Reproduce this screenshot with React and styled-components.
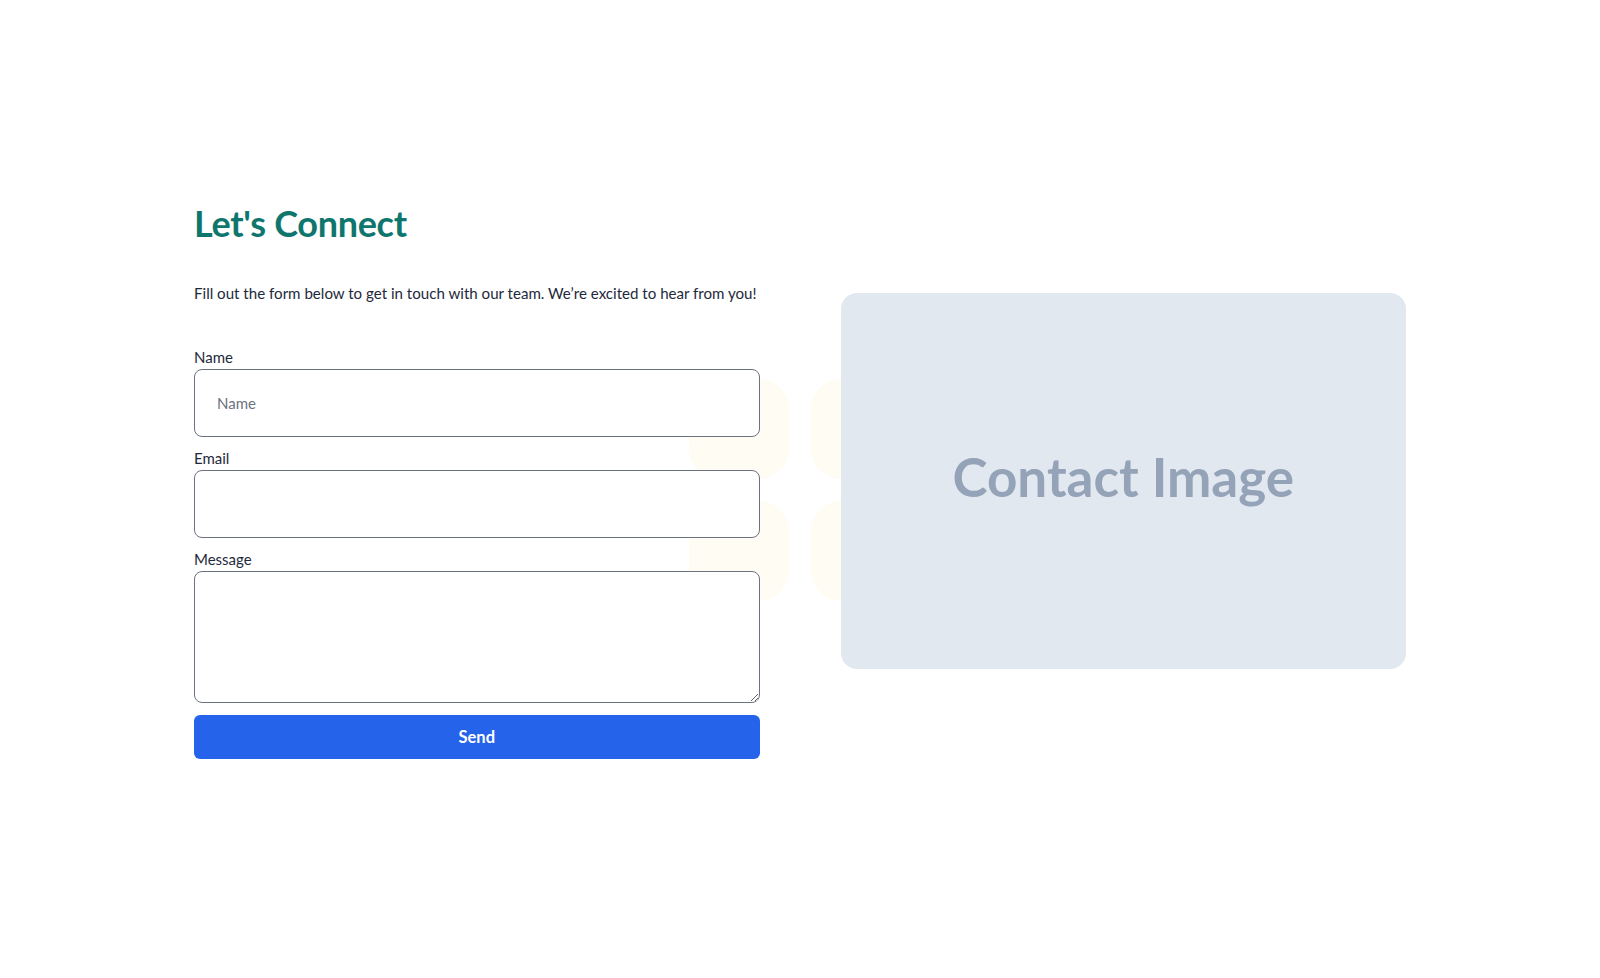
import React from 'react';
import styled, { createGlobalStyle } from 'styled-components';

const GlobalStyle = createGlobalStyle`
  body {
    margin: 0;
    background: #ffffff;
    font-family: 'Lato', 'Open Sans', sans-serif;
    color: #1e293b;
  }
  * {
    box-sizing: border-box;
  }
`;

const Page = styled.main`
  min-height: 100vh;
  display: flex;
  align-items: center;
  justify-content: center;
`;

const Container = styled.section`
  position: relative;
  width: 1212px;
  display: grid;
  grid-template-columns: 1fr 1fr;
  column-gap: 81px;
  align-items: center;
  margin-top: -16px;
`;

const Decor = styled.div`
  position: absolute;
  left: 495px;
  top: 176px;
  display: grid;
  grid-template-columns: repeat(2, 100px);
  grid-auto-rows: 100px;
  gap: 22px;
  z-index: 0;
`;

const Blob = styled.div`
  background: #fefcf3;
  border-radius: 30px;
`;

const Column = styled.div`
  position: relative;
  z-index: 1;
`;

const Heading = styled.h1`
  margin: 0 0 38px;
  font-size: 36px;
  line-height: 40px;
  font-weight: 700;
  color: #0f766e;
  letter-spacing: -0.3px;
`;

const Intro = styled.p`
  margin: 0 0 42px;
  font-size: 15.1px;
  line-height: 24px;
  white-space: nowrap;
  color: #1e293b;
`;

const Form = styled.form`
  display: flex;
  flex-direction: column;
  gap: 11px;
`;

const Field = styled.div`
  display: flex;
  flex-direction: column;
  gap: 2px;
`;

const Label = styled.label`
  font-size: 15px;
  line-height: 20px;
  color: #1e293b;
`;

const Input = styled.input`
  width: 100%;
  height: 68px;
  padding: 0 22px;
  border: 1px solid #6b7280;
  border-radius: 8px;
  background: #ffffff;
  font-family: inherit;
  font-size: 15px;
  color: #1e293b;
  outline: none;

  &::placeholder {
    color: #6b7280;
  }
`;

const TextArea = styled.textarea`
  width: 100%;
  height: 132px;
  padding: 16px 22px;
  border: 1px solid #6b7280;
  border-radius: 8px;
  background: #ffffff;
  font-family: inherit;
  font-size: 15px;
  resize: vertical;
  outline: none;
`;

const SendButton = styled.button`
  margin-top: 1px;
  width: 100%;
  height: 44px;
  border: none;
  border-radius: 6px;
  background: #2563eb;
  color: #ffffff;
  font-family: inherit;
  font-size: 16.5px;
  font-weight: 700;
  cursor: pointer;
`;

const ImageBox = styled.div`
  position: relative;
  z-index: 1;
  height: 376px;
  padding-bottom: 10px;
  border-radius: 16px;
  background: #e2e8f0;
  display: flex;
  align-items: center;
  justify-content: center;
  font-family: 'Lato', sans-serif;
  font-size: 53px;
  font-weight: 700;
  color: #94a3b8;
`;

const fields = [
  { id: 'name', label: 'Name', placeholder: 'Name' },
  { id: 'email', label: 'Email', placeholder: '' },
];

const App = () => {
  return (
    <>
      <GlobalStyle />
      <Page>
        <Container>
          <Decor aria-hidden="true">
            <Blob />
            <Blob />
            <Blob />
            <Blob />
          </Decor>
          <Column>
            <Heading>Let's Connect</Heading>
            <Intro>
              Fill out the form below to get in touch with our team. We’re excited to hear from you!
            </Intro>
            <Form onSubmit={(e) => e.preventDefault()}>
              {fields.map((f) => (
                <Field key={f.id}>
                  <Label htmlFor={f.id}>{f.label}</Label>
                  <Input id={f.id} placeholder={f.placeholder} />
                </Field>
              ))}
              <Field>
                <Label htmlFor="message">Message</Label>
                <TextArea id="message" />
              </Field>
              <SendButton type="submit">Send</SendButton>
            </Form>
          </Column>
          <ImageBox>Contact Image</ImageBox>
        </Container>
      </Page>
    </>
  );
};

export default App;
